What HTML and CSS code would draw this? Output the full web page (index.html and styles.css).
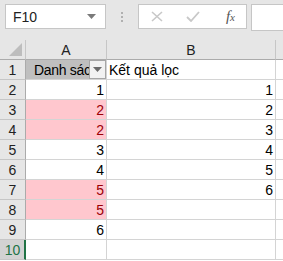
FILE: index.html
```html
<!DOCTYPE html>
<html lang="vi">
<head>
    <meta charset="UTF-8">
    <meta name="viewport" content="width=device-width, initial-scale=1.0">
    <title>Kết quả lọc</title>
    <link rel="stylesheet" href="styles.css">
</head>
<body>
    <div class="toolbar">
        <div class="namebox">
            <span>F10</span>
            <svg class="caret" width="9" height="5" viewBox="0 0 9 5"><path d="M0 0h9L4.5 5z" fill="#7a7a7a"/></svg>
        </div>
        <div class="grip"><i></i><i></i><i></i></div>
        <div class="fxbox">
            <svg width="12" height="11" viewBox="0 0 12 11"><path d="M1 1l10 9M11 1L1 10" stroke="#c8c8c8" stroke-width="1.6"/></svg>
            <svg width="14" height="11" viewBox="0 0 14 11"><path d="M1 6l4 4 8-9" stroke="#c8c8c8" stroke-width="1.8" fill="none"/></svg>
            <span class="fx">f<sub>x</sub></span>
        </div>
        <div class="formula"></div>
    </div>

    <div class="sheet">
        <div class="corner"><svg width="13" height="13" viewBox="0 0 13 13"><path d="M13 0v13H0z" fill="#bdbdbd"/></svg></div>
        <div class="colhead">A</div>
        <div class="colhead">B</div>
        <div class="colhead last"></div>

        <div class="rowhead">1</div>
        <div class="cell title">
            <span>Danh sách</span>
            <div class="filter"><svg width="9" height="5" viewBox="0 0 9 5"><path d="M0 0h9L4.5 5z" fill="#6b6b6b"/></svg></div>
        </div>
        <div class="cell">Kết quả lọc</div>
        <div class="cell last"></div>

        <div class="rowhead">2</div>
        <div class="cell num">1</div>
        <div class="cell num">1</div>
        <div class="cell last"></div>

        <div class="rowhead">3</div>
        <div class="cell num dup">2</div>
        <div class="cell num">2</div>
        <div class="cell last"></div>

        <div class="rowhead">4</div>
        <div class="cell num dup">2</div>
        <div class="cell num">3</div>
        <div class="cell last"></div>

        <div class="rowhead">5</div>
        <div class="cell num">3</div>
        <div class="cell num">4</div>
        <div class="cell last"></div>

        <div class="rowhead">6</div>
        <div class="cell num">4</div>
        <div class="cell num">5</div>
        <div class="cell last"></div>

        <div class="rowhead">7</div>
        <div class="cell num dup">5</div>
        <div class="cell num">6</div>
        <div class="cell last"></div>

        <div class="rowhead">8</div>
        <div class="cell num dup">5</div>
        <div class="cell"></div>
        <div class="cell last"></div>

        <div class="rowhead">9</div>
        <div class="cell num">6</div>
        <div class="cell"></div>
        <div class="cell last"></div>

        <div class="rowhead active">10</div>
        <div class="cell"></div>
        <div class="cell"></div>
        <div class="cell last"></div>
    </div>
</body>
</html>
```

FILE: styles.css
```css
body {
    margin: 0;
    background: #ffffff;
    font-family: "Liberation Sans", Arial, sans-serif;
    font-size: 14px;
    overflow: hidden;
}

.toolbar {
    display: flex;
    align-items: flex-start;
    height: 40px;
    padding-top: 4px;
    box-sizing: border-box;
    background: #e6e6e6;
}

.namebox {
    display: flex;
    align-items: center;
    justify-content: space-between;
    margin-left: 5px;
    width: 101px;
    height: 25px;
    box-sizing: border-box;
    padding: 0 9px 0 7px;
    background: #fff;
    border: 1px solid #c6c6c6;
    color: #222;
    font-size: 14px;
}

.grip {
    width: 32px;
    height: 25px;
    display: flex;
    flex-direction: column;
    align-items: center;
    justify-content: center;
    gap: 2px;
}

.grip i {
    width: 2px;
    height: 2px;
    background: #b0b0b0;
}

.fxbox {
    display: flex;
    align-items: center;
    width: 109px;
    height: 25px;
    box-sizing: border-box;
    padding: 0 11px 0 12px;
    gap: 23px;
    background: #fff;
    border: 1px solid #c6c6c6;
}

.fx {
    margin-left: auto;
    font-family: "Liberation Serif", serif;
    font-style: italic;
    font-size: 15px;
    color: #555;
}

.fx sub {
    font-size: 11px;
    vertical-align: 0;
}

.formula {
    margin-left: 4px;
    flex: 1;
    height: 25px;
    background: #fff;
    border: 1px solid #c6c6c6;
    border-right: none;
}

.sheet {
    display: grid;
    grid-template-columns: 26px 81px 169px 1fr;
    grid-auto-rows: 20px;
}

.sheet > div {
    box-sizing: border-box;
    display: flex;
    align-items: center;
    overflow: hidden;
    white-space: nowrap;
}

.corner {
    background: #e6e6e6;
    justify-content: flex-end;
    align-items: flex-end !important;
    padding: 0 3px 3px 0;
    border-right: 1px solid #c6c6c6;
    border-bottom: 1px solid #ababab;
}

.colhead {
    background: #e6e6e6;
    justify-content: center;
    color: #222;
    border-right: 1px solid #c6c6c6;
    border-bottom: 1px solid #ababab;
}

.colhead.last {
    border-right: none;
}

.rowhead {
    background: #e6e6e6;
    justify-content: center;
    color: #222;
    border-right: 1px solid #ababab;
    border-bottom: 1px solid #c6c6c6;
}

.rowhead.active {
    background: #d2d2d2;
    color: #217346;
    border-right: 2px solid #217346;
    padding-left: 1px;
}

.cell {
    color: #000;
    padding: 0 2px;
    border-right: 1px solid #d4d4d4;
    border-bottom: 1px solid #d4d4d4;
}

.cell.last {
    border-right: none;
}

.num {
    justify-content: flex-end;
}

.dup {
    background: #ffc7ce;
    color: #9c0006;
}

.title {
    position: relative;
    background: #bfbfbf;
    padding-left: 8px;
    letter-spacing: -0.3px;
}

.filter {
    position: absolute;
    right: 0;
    top: 0;
    width: 17px;
    height: 19px;
    box-sizing: border-box;
    display: flex;
    align-items: center;
    justify-content: center;
    background: #f2f2f2;
    border: 1px solid #a6a6a6;
}
```
